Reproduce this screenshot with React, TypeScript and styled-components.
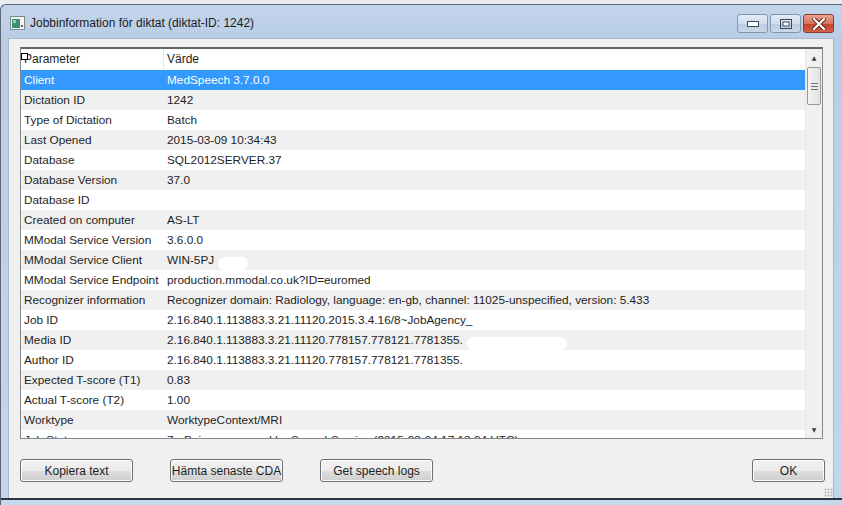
import styled, { createGlobalStyle } from "styled-components";

type Row = {
  name: string;
  value: string;
  redact?: number;
};

const rows: Row[] = [
  { name: "Client", value: "MedSpeech 3.7.0.0" },
  { name: "Dictation ID", value: "1242" },
  { name: "Type of Dictation", value: "Batch" },
  { name: "Last Opened", value: "2015-03-09 10:34:43" },
  { name: "Database", value: "SQL2012SERVER.37" },
  { name: "Database Version", value: "37.0" },
  { name: "Database ID", value: "" },
  { name: "Created on computer", value: "AS-LT" },
  { name: "MModal Service Version", value: "3.6.0.0" },
  { name: "MModal Service Client", value: "WIN-5PJ", redact: 30 },
  { name: "MModal Service Endpoint", value: "production.mmodal.co.uk?ID=euromed" },
  {
    name: "Recognizer information",
    value: "Recognizer domain: Radiology, language: en-gb, channel: 11025-unspecified, version: 5.433",
  },
  { name: "Job ID", value: "2.16.840.1.113883.3.21.11120.2015.3.4.16/8~JobAgency_" },
  { name: "Media ID", value: "2.16.840.1.113883.3.21.11120.778157.778121.7781355.", redact: 100 },
  { name: "Author ID", value: "2.16.840.1.113883.3.21.11120.778157.778121.7781355." },
  { name: "Expected T-score (T1)", value: "0.83" },
  { name: "Actual T-score (T2)", value: "1.00" },
  { name: "Worktype", value: "WorktypeContext/MRI" },
  { name: "Job Status", value: "7 - Being processed by SpeechService (2015-03-04 17:13:04 UTC)" },
];

const GlobalStyle = createGlobalStyle`
  body {
    margin: 0;
    background: #e9ebee;
    font-family: "Segoe UI", "Liberation Sans", Arial, sans-serif;
  }
`;

export default function App() {
  return (
    <>
      <GlobalStyle />
      <Screen>
        <Window>
          <TitleBar>
            <TitleIcon width="15" height="14" viewBox="0 0 15 14">
              <rect x="0.5" y="0.5" width="14" height="13" fill="#f4f6f4" stroke="#7d8a88" />
              <rect x="2" y="3" width="8" height="9" fill="#3d8f74" />
              <rect x="3" y="4" width="3" height="3" fill="#8fd0b4" />
              <rect x="11" y="9" width="2" height="2" fill="#4f6a62" />
            </TitleIcon>
            <Title>Jobbinformation för diktat (diktat-ID: 1242)</Title>
            <Caption>
              <CapButton>
                <svg width="12" height="6" viewBox="0 0 12 6">
                  <rect x="0.5" y="0.5" width="11" height="5" fill="#fff" stroke="#3c4a5c" />
                </svg>
              </CapButton>
              <CapButton>
                <svg width="12" height="10" viewBox="0 0 12 10">
                  <rect x="0.5" y="0.5" width="11" height="9" fill="none" stroke="#3c4a5c" />
                  <rect x="3" y="3" width="6" height="4" fill="#fff" stroke="#3c4a5c" />
                </svg>
              </CapButton>
              <CloseButton>
                <svg width="14" height="12" viewBox="0 0 14 12">
                  <path d="M2 1 L12 11 M12 1 L2 11" stroke="#5a1e14" strokeWidth="4" strokeLinecap="square" />
                  <path d="M2 1 L12 11 M12 1 L2 11" stroke="#fff" strokeWidth="2.2" strokeLinecap="square" />
                </svg>
              </CloseButton>
            </Caption>
          </TitleBar>
          <Client>
            <ListView>
              <Columns>
                <Header>
                  <HeadCell $width={143}>Parameter</HeadCell>
                  <HeadCell>Värde</HeadCell>
                </Header>
                <Body>
                  {rows.map((r, i) => (
                    <ListRow key={r.name} $selected={i === 0} $alt={i % 2 === 1}>
                      <Cell $width={143}>{r.name}</Cell>
                      <Cell>
                        {r.value}
                        {r.redact ? <Redact style={{ width: r.redact }} /> : null}
                      </Cell>
                    </ListRow>
                  ))}
                </Body>
              </Columns>
              <ScrollBar>
                <Arrow>▲</Arrow>
                <Track>
                  <Thumb>
                    <Grip />
                  </Thumb>
                </Track>
                <Arrow>▼</Arrow>
              </ScrollBar>
              <FocusMark />
            </ListView>
            <Buttons>
              <Button>Kopiera text</Button>
              <Button>Hämta senaste CDA</Button>
              <Button>Get speech logs</Button>
              <Spacer />
              <Button $small>OK</Button>
            </Buttons>
            <SizeGrip />
          </Client>
          <BottomFrame />
        </Window>
      </Screen>
    </>
  );
}

//style
const Screen = styled.div`
  width: 842px;
  height: 505px;
  padding-top: 4px;
  box-sizing: border-box;
  overflow: hidden;
`;

const Window = styled.div`
  display: flex;
  flex-direction: column;
  height: 100%;
  border-top: 1px solid #5d6673;
  border-left: 1px solid #5d6673;
  border-top-left-radius: 6px;
  background: linear-gradient(180deg, #c2d5ec 0px, #b9cde6 34px, #c3d6ec 100%);
  box-sizing: border-box;
`;

const TitleBar = styled.div`
  display: flex;
  align-items: center;
  height: 33px;
  padding: 0 8px 0 9px;
  flex-shrink: 0;
`;

const TitleIcon = styled.svg`
  margin-top: 3px;
`;

const Title = styled.div`
  margin-left: 5px;
  margin-top: 3px;
  font-size: 12px;
  color: #1b1b1b;
  flex: 1;
`;

const Caption = styled.div`
  display: flex;
  gap: 2px;
  align-self: flex-start;
  margin-top: 9px;
`;

const CapButton = styled.div`
  width: 29px;
  height: 17px;
  display: flex;
  align-items: center;
  justify-content: center;
  border: 1px solid #8396b0;
  border-radius: 3px;
  background: linear-gradient(180deg, #e3ebf5 0%, #cfdced 50%, #bccde3 51%, #c9d8ea 100%);
`;

const CloseButton = styled(CapButton)`
  border-color: #8a3a2e;
  background: linear-gradient(180deg, #e8a493 0%, #d7725e 50%, #c4402a 51%, #d1604a 100%);
`;

const Client = styled.div`
  position: relative;
  flex: 1;
  margin: 0 8px 0 7px;
  padding: 8px 10px 11px 11px;
  background: #f0f0f0;
  border: 1px solid #a9b8c9;
  border-bottom: none;
  display: flex;
  flex-direction: column;
`;

const ListView = styled.div`
  position: relative;
  display: flex;
  height: 392px;
  border: 1px solid #828790;
  border-top: 2px solid #646464;
  background: #fff;
  box-sizing: border-box;
`;

const Columns = styled.div`
  flex: 1;
  display: flex;
  flex-direction: column;
  min-width: 0;
`;

const Header = styled.div`
  display: flex;
  height: 21px;
  align-items: center;
  background: #fff;
  flex-shrink: 0;
`;

const HeadCell = styled.div<{ $width?: number }>`
  width: ${(p) => (p.$width ? `${p.$width}px` : "auto")};
  flex: ${(p) => (p.$width ? "none" : 1)};
  height: 100%;
  line-height: 21px;
  padding-left: 3px;
  box-sizing: border-box;
  font-size: 12px;
  color: #1e1e1e;
  border-right: ${(p) => (p.$width ? "1px solid #e4e6ea" : "none")};
`;

const Body = styled.div`
  flex: 1;
  overflow: hidden;
`;

const ListRow = styled.div<{ $selected: boolean; $alt: boolean }>`
  display: flex;
  height: 20px;
  align-items: center;
  background: ${(p) => (p.$selected ? "#3399ff" : p.$alt ? "#f0f0f0" : "#ffffff")};
  color: ${(p) => (p.$selected ? "#ffffff" : "#1e1e1e")};
  font-size: 11.8px;
  white-space: nowrap;
`;

const Cell = styled.div<{ $width?: number }>`
  width: ${(p) => (p.$width ? `${p.$width}px` : "auto")};
  flex: ${(p) => (p.$width ? "none" : 1)};
  padding-left: 3px;
  box-sizing: border-box;
  overflow: hidden;
  display: flex;
  align-items: center;
`;

const Redact = styled.span`
  display: inline-block;
  height: 13px;
  margin-left: 4px;
  margin-top: 6px;
  background: #ffffff;
  border-radius: 7px;
`;

const ScrollBar = styled.div`
  width: 17px;
  display: flex;
  flex-direction: column;
  background: #f0f0f0;
  border-left: 1px solid #e6e6e6;
  box-sizing: border-box;
`;

const Arrow = styled.div`
  height: 17px;
  display: flex;
  align-items: center;
  justify-content: center;
  font-size: 6px;
  color: #3a3a3a;
  font-family: "DejaVu Sans", sans-serif;
`;

const Track = styled.div`
  flex: 1;
  padding: 1px 0;
`;

const Thumb = styled.div`
  height: 36px;
  margin: 0 1px;
  border: 1px solid #979797;
  border-radius: 2px;
  background: linear-gradient(90deg, #f3f3f3, #e2e2e2);
  display: flex;
  align-items: center;
  justify-content: center;
`;

const Grip = styled.div`
  width: 7px;
  height: 5px;
  border-top: 1px solid #6f6f6f;
  border-bottom: 1px solid #6f6f6f;
  position: relative;
  &::after {
    content: "";
    position: absolute;
    left: 0;
    right: 0;
    top: 2px;
    border-top: 1px solid #6f6f6f;
  }
`;

const FocusMark = styled.div`
  position: absolute;
  left: 0;
  top: 4px;
  width: 5px;
  height: 5px;
  border: 1px solid #000;
  background: #fff;
`;

const Buttons = styled.div`
  display: flex;
  gap: 37px;
  margin-top: 20px;
  padding-left: 0;
`;

const Spacer = styled.div`
  flex: 1;
`;

const Button = styled.div<{ $small?: boolean }>`
  width: ${(p) => (p.$small ? "73px" : "113px")};
  height: 23px;
  box-sizing: border-box;
  border: 1px solid #707070;
  border-radius: 3px;
  background: linear-gradient(180deg, #f2f2f2 0%, #ebebeb 50%, #dddddd 51%, #cfcfcf 100%);
  box-shadow: inset 0 0 0 1px #fcfcfc;
  display: flex;
  align-items: center;
  justify-content: center;
  font-size: 12px;
  color: #1e1e1e;
  margin-right: ${(p) => (p.$small ? "-2px" : "0")};
`;

const SizeGrip = styled.div`
  position: absolute;
  right: 0;
  bottom: 1px;
  width: 9px;
  height: 9px;
  background-image: radial-gradient(#b8b8b8 45%, transparent 50%);
  background-size: 3px 3px;
`;

const BottomFrame = styled.div`
  height: 5px;
  flex-shrink: 0;
  border-top: 2px solid #2a3440;
  background: #c6d8ee;
`;
